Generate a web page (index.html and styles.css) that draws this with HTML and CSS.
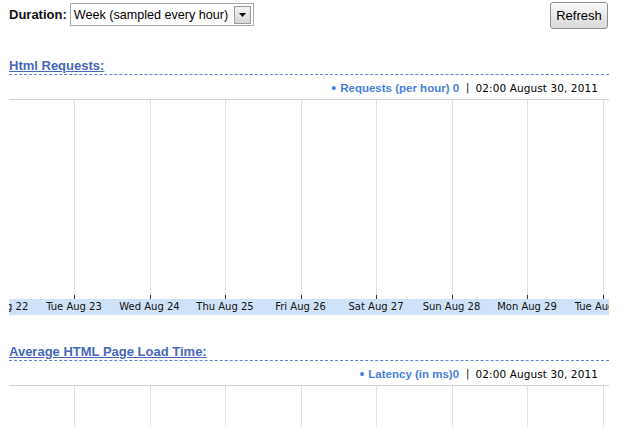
FILE: index.html
```html
<!DOCTYPE html>
<html>
<head>
<meta charset="utf-8">
<link rel="stylesheet" href="styles.css">
</head>
<body>
<div class="page">
  <div class="topbar">
    <div class="duration">
      <span class="dlabel">Duration:</span>
      <div class="select">
        <span class="sel-text">Week (sampled every hour)</span>
        <span class="sel-btn"><svg width="7" height="4" viewBox="0 0 7 4"><path d="M0 0h7L3.5 4z" fill="#000"/></svg></span>
      </div>
    </div>
    <button class="refresh">Refresh</button>
  </div>

  <div class="section first">
    <div class="title"><a class="title-link">Html Requests:</a></div>
    <div class="legend">
      <span class="dot">•</span>
      <span class="series">Requests (per hour) 0</span>
      <span class="sep">|</span>
      <span class="when">02:00 August 30, 2011</span>
    </div>
    <div class="chart">
      <div class="grid tall">
        <div class="lead"></div>
        <div class="col"></div><div class="col"></div><div class="col"></div><div class="col"></div>
        <div class="col"></div><div class="col"></div><div class="col"></div><div class="col"></div>
      </div>
      <div class="axis">
        <div class="labels">
          <span>Mon Aug 22</span><span>Tue Aug 23</span><span>Wed Aug 24</span><span>Thu Aug 25</span>
          <span>Fri Aug 26</span><span>Sat Aug 27</span><span>Sun Aug 28</span><span>Mon Aug 29</span>
          <span>Tue Aug 30</span>
        </div>
      </div>
    </div>
  </div>

  <div class="section second">
    <div class="title"><a class="title-link">Average HTML Page Load Time:</a></div>
    <div class="legend">
      <span class="dot">•</span>
      <span class="series">Latency (in ms)0</span>
      <span class="sep">|</span>
      <span class="when">02:00 August 30, 2011</span>
    </div>
    <div class="chart">
      <div class="grid short">
        <div class="lead"></div>
        <div class="col"></div><div class="col"></div><div class="col"></div><div class="col"></div>
        <div class="col"></div><div class="col"></div><div class="col"></div><div class="col"></div>
      </div>
    </div>
  </div>
</div>
</body>
</html>
```

FILE: styles.css
```css
html, body {
  margin: 0;
  padding: 0;
  background: #fff;
  overflow: hidden;
}
.page {
  width: 600px;
  margin-left: 9px;
  font-family: "Liberation Sans", Arial, sans-serif;
  color: #000;
}
.topbar {
  display: flex;
  justify-content: space-between;
  align-items: flex-start;
  height: 30px;
}
.duration {
  display: flex;
  align-items: center;
  margin-top: 3px;
}
.dlabel {
  font-weight: bold;
  font-size: 13px;
  color: #111;
  margin-right: 3px;
}
.select {
  display: flex;
  align-items: center;
  justify-content: space-between;
  width: 182px;
  height: 21px;
  border: 1px solid #a5acb2;
  background: #fff;
}
.sel-text {
  font-size: 12.6px;
  padding-left: 3px;
  white-space: nowrap;
}
.sel-btn {
  display: flex;
  align-items: center;
  justify-content: center;
  width: 15px;
  height: 16px;
  margin-right: 2px;
  border: 1px solid #9a9a9a;
  background: linear-gradient(#f4f4f4, #d6d6d6);
}
.refresh {
  margin: 2px 1px 0 0;
  width: 58px;
  height: 27px;
  padding: 0;
  font-family: "Liberation Sans", Arial, sans-serif;
  font-size: 13px;
  color: #000;
  border: 1px solid #8f8f8f;
  border-radius: 3px;
  background: linear-gradient(#fafafa, #e6e6e6 55%, #d9d9d9);
}
.section.first {
  margin-top: 27px;
}
.section.second {
  margin-top: 28px;
}
.title {
  height: 16px;
  padding-bottom: 1px;
  border-bottom: 1px dashed #5f84cf;
  line-height: 16px;
}
.title-link {
  font-size: 13px;
  font-weight: bold;
  color: #4668ba;
  text-decoration: underline;
}
.legend {
  display: flex;
  justify-content: flex-end;
  align-items: center;
  height: 14px;
  margin-top: 6px;
  padding-right: 11px;
  line-height: 14px;
}
.dot {
  color: #4a7fdc;
  font-size: 14px;
  margin-right: 4px;
}
.series {
  font-weight: bold;
  font-size: 11.5px;
  color: #4a7fdc;
}
.sep {
  font-family: "DejaVu Sans", Verdana, sans-serif;
  font-size: 10px;
  margin: 0 6px 0 7px;
}
.when {
  font-family: "DejaVu Sans", Verdana, sans-serif;
  font-size: 10.5px;
  letter-spacing: 0.1px;
}
.chart {
  margin-top: 4px;
  border-top: 1px solid #cfcfcf;
  overflow: hidden;
}
.grid {
  display: flex;
}
.grid.tall {
  height: 199px;
}
.grid.short {
  height: 60px;
}
.lead {
  flex: 0 0 65px;
}
.col {
  flex: 0 0 75.5px;
  background: linear-gradient(#e3dfd3 calc(100% - 4px), #3a3a3a calc(100% - 4px)) no-repeat left top / 1px 100%;
}
.grid.short .col {
  background: linear-gradient(#e3dfd3, #e3dfd3) no-repeat left top / 1px 100%;
}
.axis {
  height: 16px;
  background: #cfe2f8;
  overflow: hidden;
}
.labels {
  display: flex;
  margin-left: -48.25px;
  font-family: "DejaVu Sans", Verdana, sans-serif;
  font-size: 10px;
  line-height: 16px;
  color: #111;
}
.labels span {
  flex: 0 0 75.5px;
  text-align: center;
  white-space: nowrap;
}
```
